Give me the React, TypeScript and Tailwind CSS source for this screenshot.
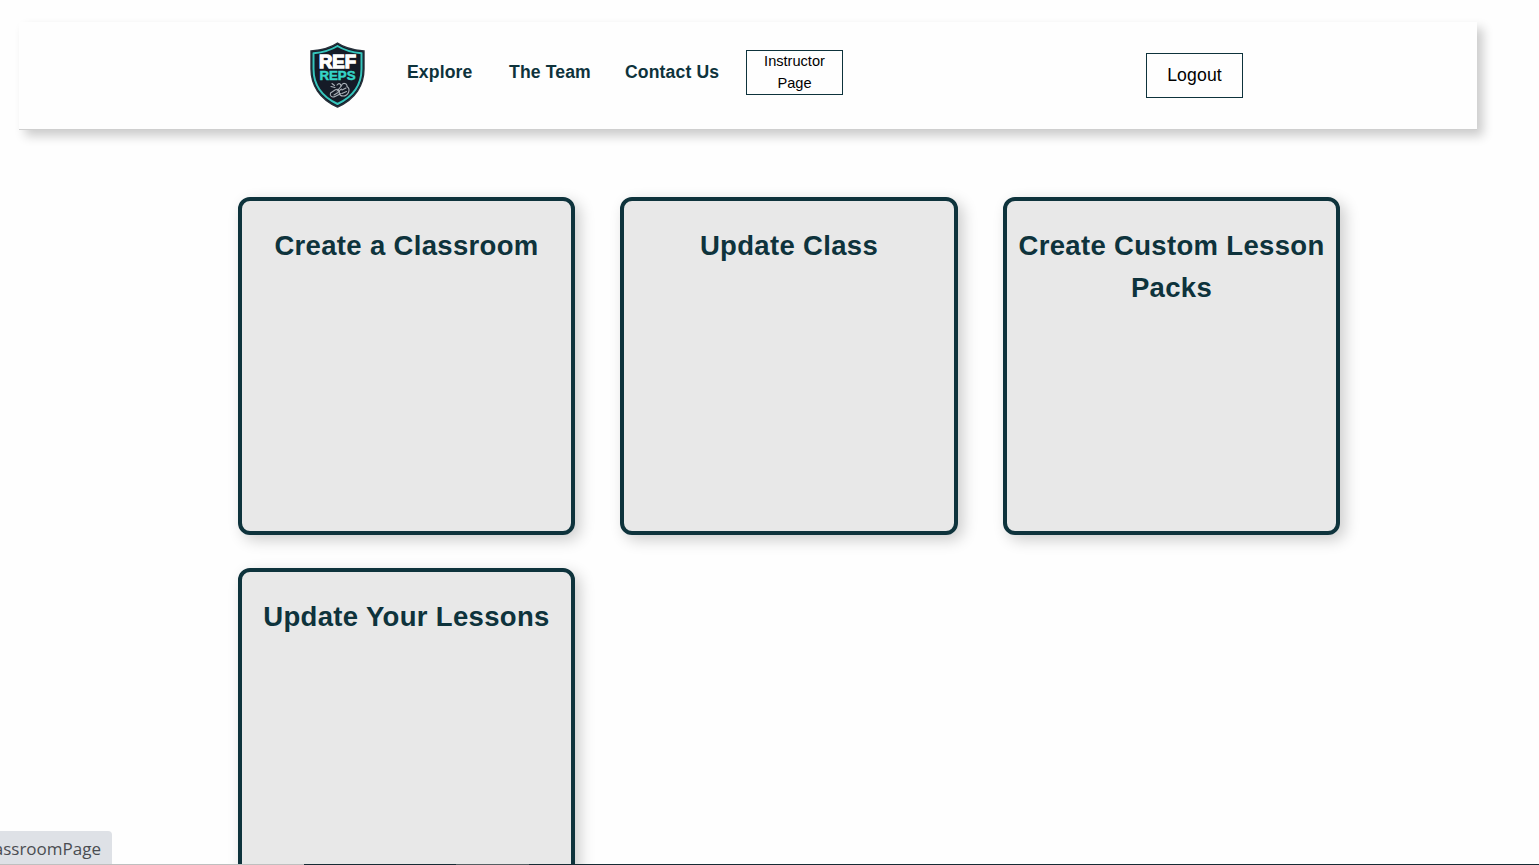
const cards = ["Create a Classroom", "Update Class", "Create Custom Lesson Packs", "Update Your Lessons"];

function Logo() {
  return (
    <svg className="block h-[66px] w-[56px]" viewBox="0 0 56 66">
      <path d="M27.500 1C20.500 6 11 8 1 9V27C1 43 9.500 57 27.500 65C45.500 57 54 43 54 27V9C44.500 8 34.500 6 27.500 1Z" fill="#141c28" stroke="#26303a" strokeWidth="1.400" />
      <path d="M27.500 4C19.500 9 12 10.500 3.500 11.300V27C3.500 42 11.500 54.500 27.500 62C43.500 54.500 51.500 42 51.500 27V11.300C43.500 10.500 35.500 9 27.500 4Z" fill="#151b27" stroke="#36c5bc" strokeWidth="2" />
      <text x="27.500" y="26" textAnchor="middle" textLength="37" lengthAdjust="spacingAndGlyphs" fontFamily="Liberation Sans, sans-serif" fontWeight="700" fontSize="18" fill="#fff" stroke="#fff" strokeWidth="1.300">REF</text>
      <text x="27.500" y="37.500" textAnchor="middle" textLength="36" lengthAdjust="spacingAndGlyphs" fontFamily="Liberation Sans, sans-serif" fontWeight="700" fontSize="12" fill="#35d6c8" stroke="#35d6c8" strokeWidth=".5">REPS</text>
      <g fill="none" stroke="#a9b0b8" strokeWidth="1.100" strokeLinecap="round">
        <path d="M22 41.500L24.500 43.500M21 44.500L25 45.500M20.500 51C19.500 54 22 56 25 54.500L31 51.500M20.500 51L25 48C28 46 30 48.500 28 50.500L24 53M27 43C29 40.500 32 42 30.500 45L27 49" />
        <path d="M31.500 44C32 40 37.500 41 37 44.500C41 47 38.500 54 33 54C28.500 54 28 48.500 31.500 47M32 48L36 46M32 51.500L36.500 49.500" />
      </g>
    </svg>
  );
}

export default function App() {
  return (
    <div className="relative h-[865px] w-[1539px] overflow-hidden bg-[#fefefe] font-['Liberation_Sans',Arial,sans-serif] text-[#0e333c]">
      <header className="mt-[22px] ml-[19px] flex h-[108px] w-[1458px] items-start border-b border-[#cfcfcf] bg-[#fefefe] shadow-[6px_6px_10px_rgba(0,0,0,0.2)]">
        <div className="mt-5 ml-[291px] w-14"><Logo /></div>
        <nav className="mt-[37px] ml-[41px] flex text-[17.6px] leading-[26px] font-bold tracking-[0.13px] whitespace-nowrap">
          <a className="w-[102px]">Explore</a>
          <a className="w-[116px]">The Team</a>
          <a className="w-[121px]">Contact Us</a>
        </nav>
        <button className="mt-7 h-[45px] w-[97px] border border-[#0e333c] px-3 text-[14.6px] leading-[22px] text-black">
          <span className="block -translate-y-px">Instructor Page</span>
        </button>
        <button className="mt-[31px] ml-[303px] h-[45px] w-[97px] border border-[#0e333c] pb-0.5 text-[17.6px] leading-[26px] tracking-[0.15px] text-black">Logout</button>
      </header>
      <main className="mt-[67px] ml-[238px] grid grid-cols-[337px_338px_337px] gap-x-[45px] gap-y-[33px]">
        {cards.map((title) => (
          <section key={title} className="h-[338px] rounded-[12px] border-4 border-[#0e333c] bg-[#e8e8e8] pt-6 shadow-[5px_5px_15px_rgba(0,0,0,0.2)]">
            <h2 className="text-center text-[27.5px] leading-[42px] font-bold tracking-[0.33px]">{title}</h2>
          </section>
        ))}
      </main>
      <div className="absolute bottom-0 left-0 flex h-[34px] w-28 justify-end overflow-hidden rounded-tr-[4px] bg-[#dee1e6] pr-[11px] font-['Open_Sans',sans-serif] text-[17px] leading-[35px] text-[#4a4d51]">classroomPage</div>
      <div className="absolute bottom-0 left-0 flex h-px w-full">
        <div className="w-[304px] bg-[#bfbfbf]" />
        <div className="w-[152px] bg-[#172b34]" />
        <div className="w-[73px] bg-[#555e62]" />
        <div className="flex-1 bg-[#172b34]" />
      </div>
    </div>
  );
}
